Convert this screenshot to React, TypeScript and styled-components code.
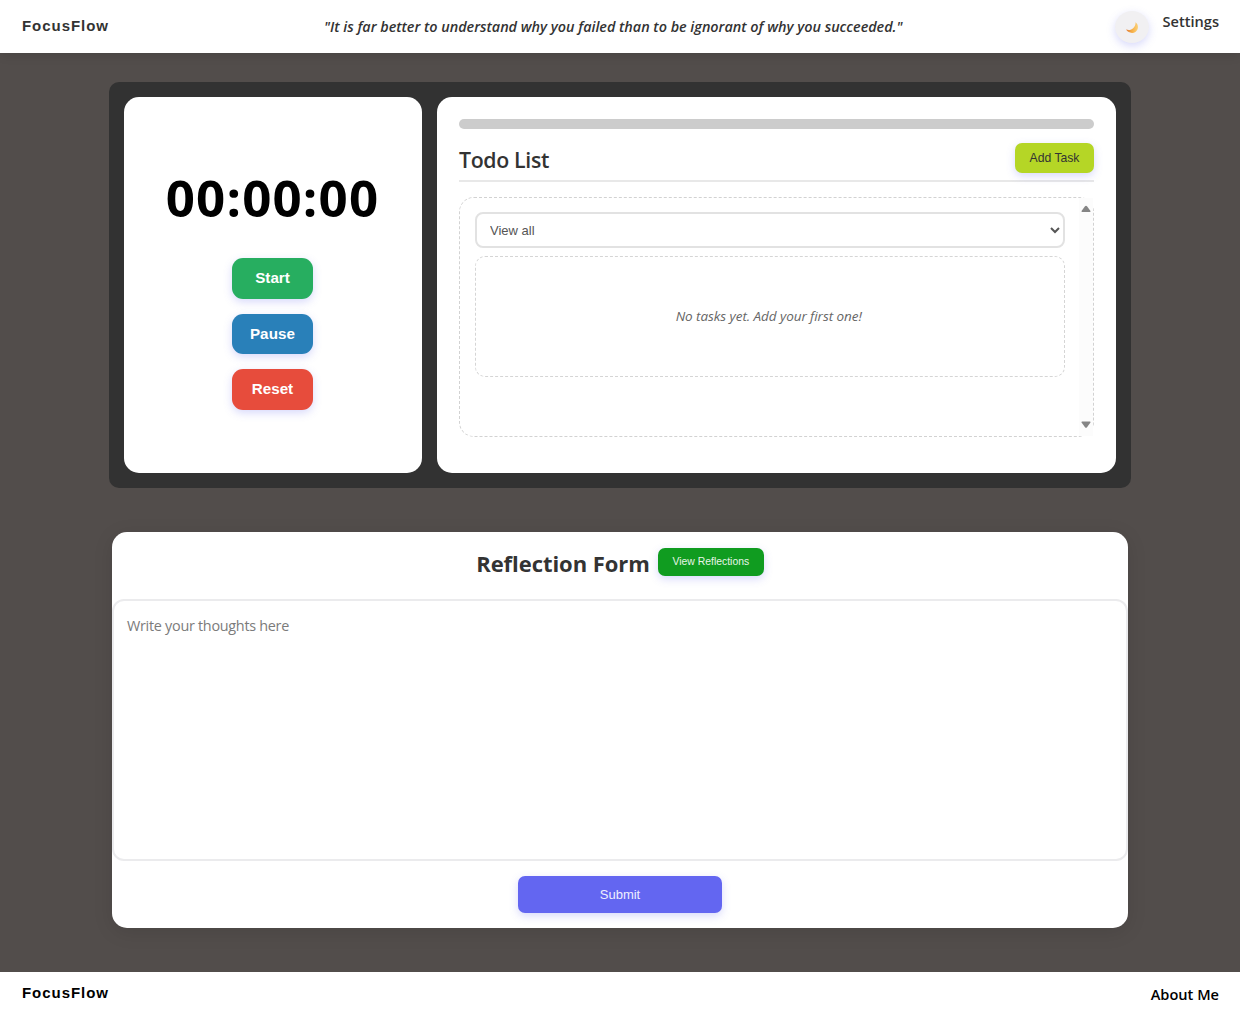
import React from "react";
import styled, { createGlobalStyle } from "styled-components";

const humanist = `"Open Sans", "Noto Sans", sans-serif`;
const arial = `"Liberation Sans", Arial, sans-serif`;

const GlobalStyle = createGlobalStyle`
  * { box-sizing: border-box; }
  body { margin: 0; background: #524d4b; font-family: ${humanist}; color: #333; }
`;

interface LabelProps {
  $size: number;
  $weight?: number;
  $spacing?: number;
  $color?: string;
  $arial?: boolean;
  $italic?: boolean;
}

const Label = styled.span<LabelProps>`
  display: block;
  font-family: ${(p) => (p.$arial ? arial : humanist)};
  font-size: ${(p) => p.$size}px;
  font-weight: ${(p) => p.$weight ?? 400};
  font-style: ${(p) => (p.$italic ? "italic" : "normal")};
  letter-spacing: ${(p) => p.$spacing ?? 0}px;
  color: ${(p) => p.$color ?? "#333"};
  line-height: 20px;
  white-space: nowrap;
`;

const Page = styled.div`
  display: flex;
  flex-direction: column;
  height: 1012px;
  overflow: hidden;
`;

const Header = styled.header`
  display: grid;
  grid-template-columns: 302px 1fr 315px;
  height: 52.5px;
  padding: 0 21px 0 22px;
  background: #fff;
  box-shadow: 0 2px 10px rgba(0, 0, 0, 0.12);
`;

const Brand = styled.div`
  padding-top: 16px;
`;

const Quote = styled.div`
  padding-top: 17px;
`;

const HeaderActions = styled.div`
  display: flex;
  justify-content: flex-end;
  gap: 13px;
  padding-top: 11px;
`;

const ThemeButton = styled.button`
  display: grid;
  place-items: center;
  width: 34px;
  height: 32px;
  padding: 0;
  border: 0;
  border-radius: 50%;
  background: #f1f0f2;
  box-shadow: 0 3px 8px rgba(99, 102, 241, 0.25);
`;

const Main = styled.main`
  display: flex;
  flex: 1;
  flex-direction: column;
  align-items: center;
  gap: 44px;
  padding-top: 29.5px;
`;

const Dashboard = styled.section`
  display: flex;
  gap: 15px;
  width: 1022px;
  height: 406px;
  padding: 15px;
  border-radius: 10px;
  background: #323232;
`;

const Card = styled.div<{ $width: number }>`
  display: flex;
  flex-direction: column;
  width: ${(p) => p.$width}px;
  border-radius: 15px;
  background: #fff;
`;

const TimerCard = styled(Card)`
  align-items: center;
  gap: 15px;
  padding: 62px 1px 0 0;
`;

const TimeBox = styled.div`
  height: 84px;
  display: flex;
  align-items: center;
  padding-bottom: 9px;
`;

const ActionButton = styled.button<{ $bg: string; $w: number; $h: number; $radius: number }>`
  display: flex;
  align-items: center;
  justify-content: center;
  width: ${(p) => p.$w}px;
  height: ${(p) => p.$h}px;
  flex: none;
  padding: 0;
  border: 0;
  border-radius: ${(p) => p.$radius}px;
  background: ${(p) => p.$bg};
  box-shadow: 0 3px 8px rgba(99, 102, 241, 0.25);
`;

const TodoCard = styled(Card)`
  padding: 22px 22px 0;
`;

const Progress = styled.div`
  height: 10px;
  border-radius: 5px;
  background: #ccc;
`;

const TodoHeader = styled.div`
  display: flex;
  align-items: flex-start;
  justify-content: space-between;
  height: 39px;
  margin-top: 14px;
  border-bottom: 2px solid #e8e8e8;
`;

const TodoTitle = styled.h2`
  display: flex;
  align-items: center;
  height: 33px;
  margin: 0;
`;

const TaskPanel = styled.div`
  display: flex;
  justify-content: space-between;
  height: 239.5px;
  margin-top: 15px;
  border: 1px dashed #d2d2d2;
  border-radius: 15px;
`;

const TaskColumn = styled.div`
  display: flex;
  flex-direction: column;
  gap: 8px;
  width: 590.5px;
  margin: 14px 0 0 14.5px;
`;

const Filter = styled.select`
  width: 100%;
  height: 36px;
  padding: 0 0 0 9.5px;
  border: 2px solid #e2e2e2;
  border-radius: 8px;
  background-color: #fff;
  color: #555;
  font: 13px ${arial};
`;

const Empty = styled.div`
  display: flex;
  align-items: center;
  justify-content: center;
  height: 120.5px;
  padding-right: 2px;
  border: 1px dashed #d5d5d5;
  border-radius: 10px;
`;

const Scrollbar = styled.div`
  display: flex;
  flex-direction: column;
  justify-content: space-between;
  width: 14px;
  padding: 7px 2px;
  background: #fcfcfc;
`;

const ReflectionCard = styled.section`
  display: flex;
  flex-direction: column;
  align-items: center;
  width: 1016px;
  height: 395.5px;
  border-radius: 15px;
  background: #fff;
  box-shadow: 0 4px 20px rgba(0, 0, 0, 0.1);
`;

const ReflectionHeader = styled.div`
  display: flex;
  gap: 8px;
  height: 67px;
  padding-top: 16px;
`;

const ReflectionTitle = styled.h2`
  margin: 0;
  height: 29px;
  display: flex;
  align-items: center;
`;

const Thoughts = styled.textarea`
  width: 100%;
  height: 262px;
  margin: 0 0 15px;
  padding: 14px 13px;
  border: 2px solid #ebebed;
  border-radius: 12px;
  background: #fff;
  resize: none;
  font: 14.4px/21px ${humanist};
  letter-spacing: -0.28px;
  &::placeholder { color: #7b7b7b; }
`;

const Footer = styled.footer`
  display: flex;
  justify-content: space-between;
  height: 40px;
  padding: 11px 21px 0 22px;
  background: #fff;
`;

const FooterLink = styled.div`
  padding-top: 1px;
`;

const Moon = () => (
  <svg width="16" height="16" viewBox="0 0 16 16">
    <defs>
      <linearGradient id="moon" x1="0" x2="1">
        <stop offset="0" stopColor="#e07b39" />
        <stop offset="0.5" stopColor="#f6ae45" />
        <stop offset="1" stopColor="#fbd27a" />
      </linearGradient>
    </defs>
    <path d="M11.6 3.2C15 6 14.6 10.6 11.7 12.7C8.6 15 4.2 13.8 2 10.6C5 11.5 7.3 11 9.1 9.3C10.9 7.6 11.7 5.5 11.6 3.2Z" fill="url(#moon)" />
  </svg>
);

const Arrow = ({ down = false }: { down?: boolean }) => (
  <svg width="10" height="8" viewBox="0 0 10 8">
    <path
      d={down ? "M1 .5H9Q10 .7 9.3 1.8L6 6.2Q5 7.3 4 6.2L.7 1.8Q0 .7 1 .5Z" : "M1 7H9Q10 6.8 9.3 5.7L6 1.3Q5 .2 4 1.3L.7 5.7Q0 6.8 1 7Z"}
      fill="#858585"
    />
  </svg>
);

const timerButtons = [
  { label: "Start", color: "#27ae60", spacing: 0 },
  { label: "Pause", color: "#2980b9", spacing: 0.1 },
  { label: "Reset", color: "#e74c3c", spacing: 0 },
];

export default function App() {
  return (
    <Page>
      <GlobalStyle />
      <Header>
        <Brand><Label $arial $size={15} $weight={700} $spacing={0.95}>FocusFlow</Label></Brand>
        <Quote>
          <Label $size={14.4} $weight={600} $italic $spacing={-0.02}>
            "It is far better to understand why you failed than to be ignorant of why you succeeded."
          </Label>
        </Quote>
        <HeaderActions>
          <ThemeButton><Moon /></ThemeButton>
          <Label $size={14.6} $weight={600}>Settings</Label>
        </HeaderActions>
      </Header>
      <Main>
        <Dashboard>
          <TimerCard $width={298}>
            <TimeBox><Label $size={51} $weight={700} $color="#000" $spacing={1.2}>00:00:00</Label></TimeBox>
            {timerButtons.map((b) => (
              <ActionButton key={b.label} $bg={b.color} $w={81} $h={40.5} $radius={11}>
                <Label $arial $size={15.2} $weight={700} $color="#fff" $spacing={b.spacing}>{b.label}</Label>
              </ActionButton>
            ))}
          </TimerCard>
          <TodoCard $width={679}>
            <Progress />
            <TodoHeader>
              <TodoTitle><Label $size={21.3} $weight={600} $spacing={-0.35}>Todo List</Label></TodoTitle>
              <ActionButton $bg="#b5d626" $w={79} $h={30} $radius={7}>
                <Label $arial $size={12.2}>Add Task</Label>
              </ActionButton>
            </TodoHeader>
            <TaskPanel>
              <TaskColumn>
                <Filter defaultValue="all"><option value="all">View all</option></Filter>
                <Empty><Label $size={13.5} $italic $color="#666" $spacing={-0.06}>No tasks yet. Add your first one!</Label></Empty>
              </TaskColumn>
              <Scrollbar><Arrow /><Arrow down /></Scrollbar>
            </TaskPanel>
          </TodoCard>
        </Dashboard>
        <ReflectionCard>
          <ReflectionHeader>
            <ReflectionTitle><Label $size={22} $weight={700} $spacing={-0.05}>Reflection Form</Label></ReflectionTitle>
            <ActionButton $bg="#109c20" $w={106} $h={28} $radius={7}>
              <Label $arial $size={10.4} $color="#e8f5e8">View Reflections</Label>
            </ActionButton>
          </ReflectionHeader>
          <Thoughts placeholder="Write your thoughts here" />
          <ActionButton $bg="#6366f1" $w={204} $h={37} $radius={7}>
            <Label $arial $size={13} $color="#eeeefe">Submit</Label>
          </ActionButton>
        </ReflectionCard>
      </Main>
      <Footer>
        <Label $arial $size={15} $weight={700} $color="#000" $spacing={0.95}>FocusFlow</Label>
        <FooterLink><Label $size={14.6} $weight={600} $color="#000">About Me</Label></FooterLink>
      </Footer>
    </Page>
  );
}
